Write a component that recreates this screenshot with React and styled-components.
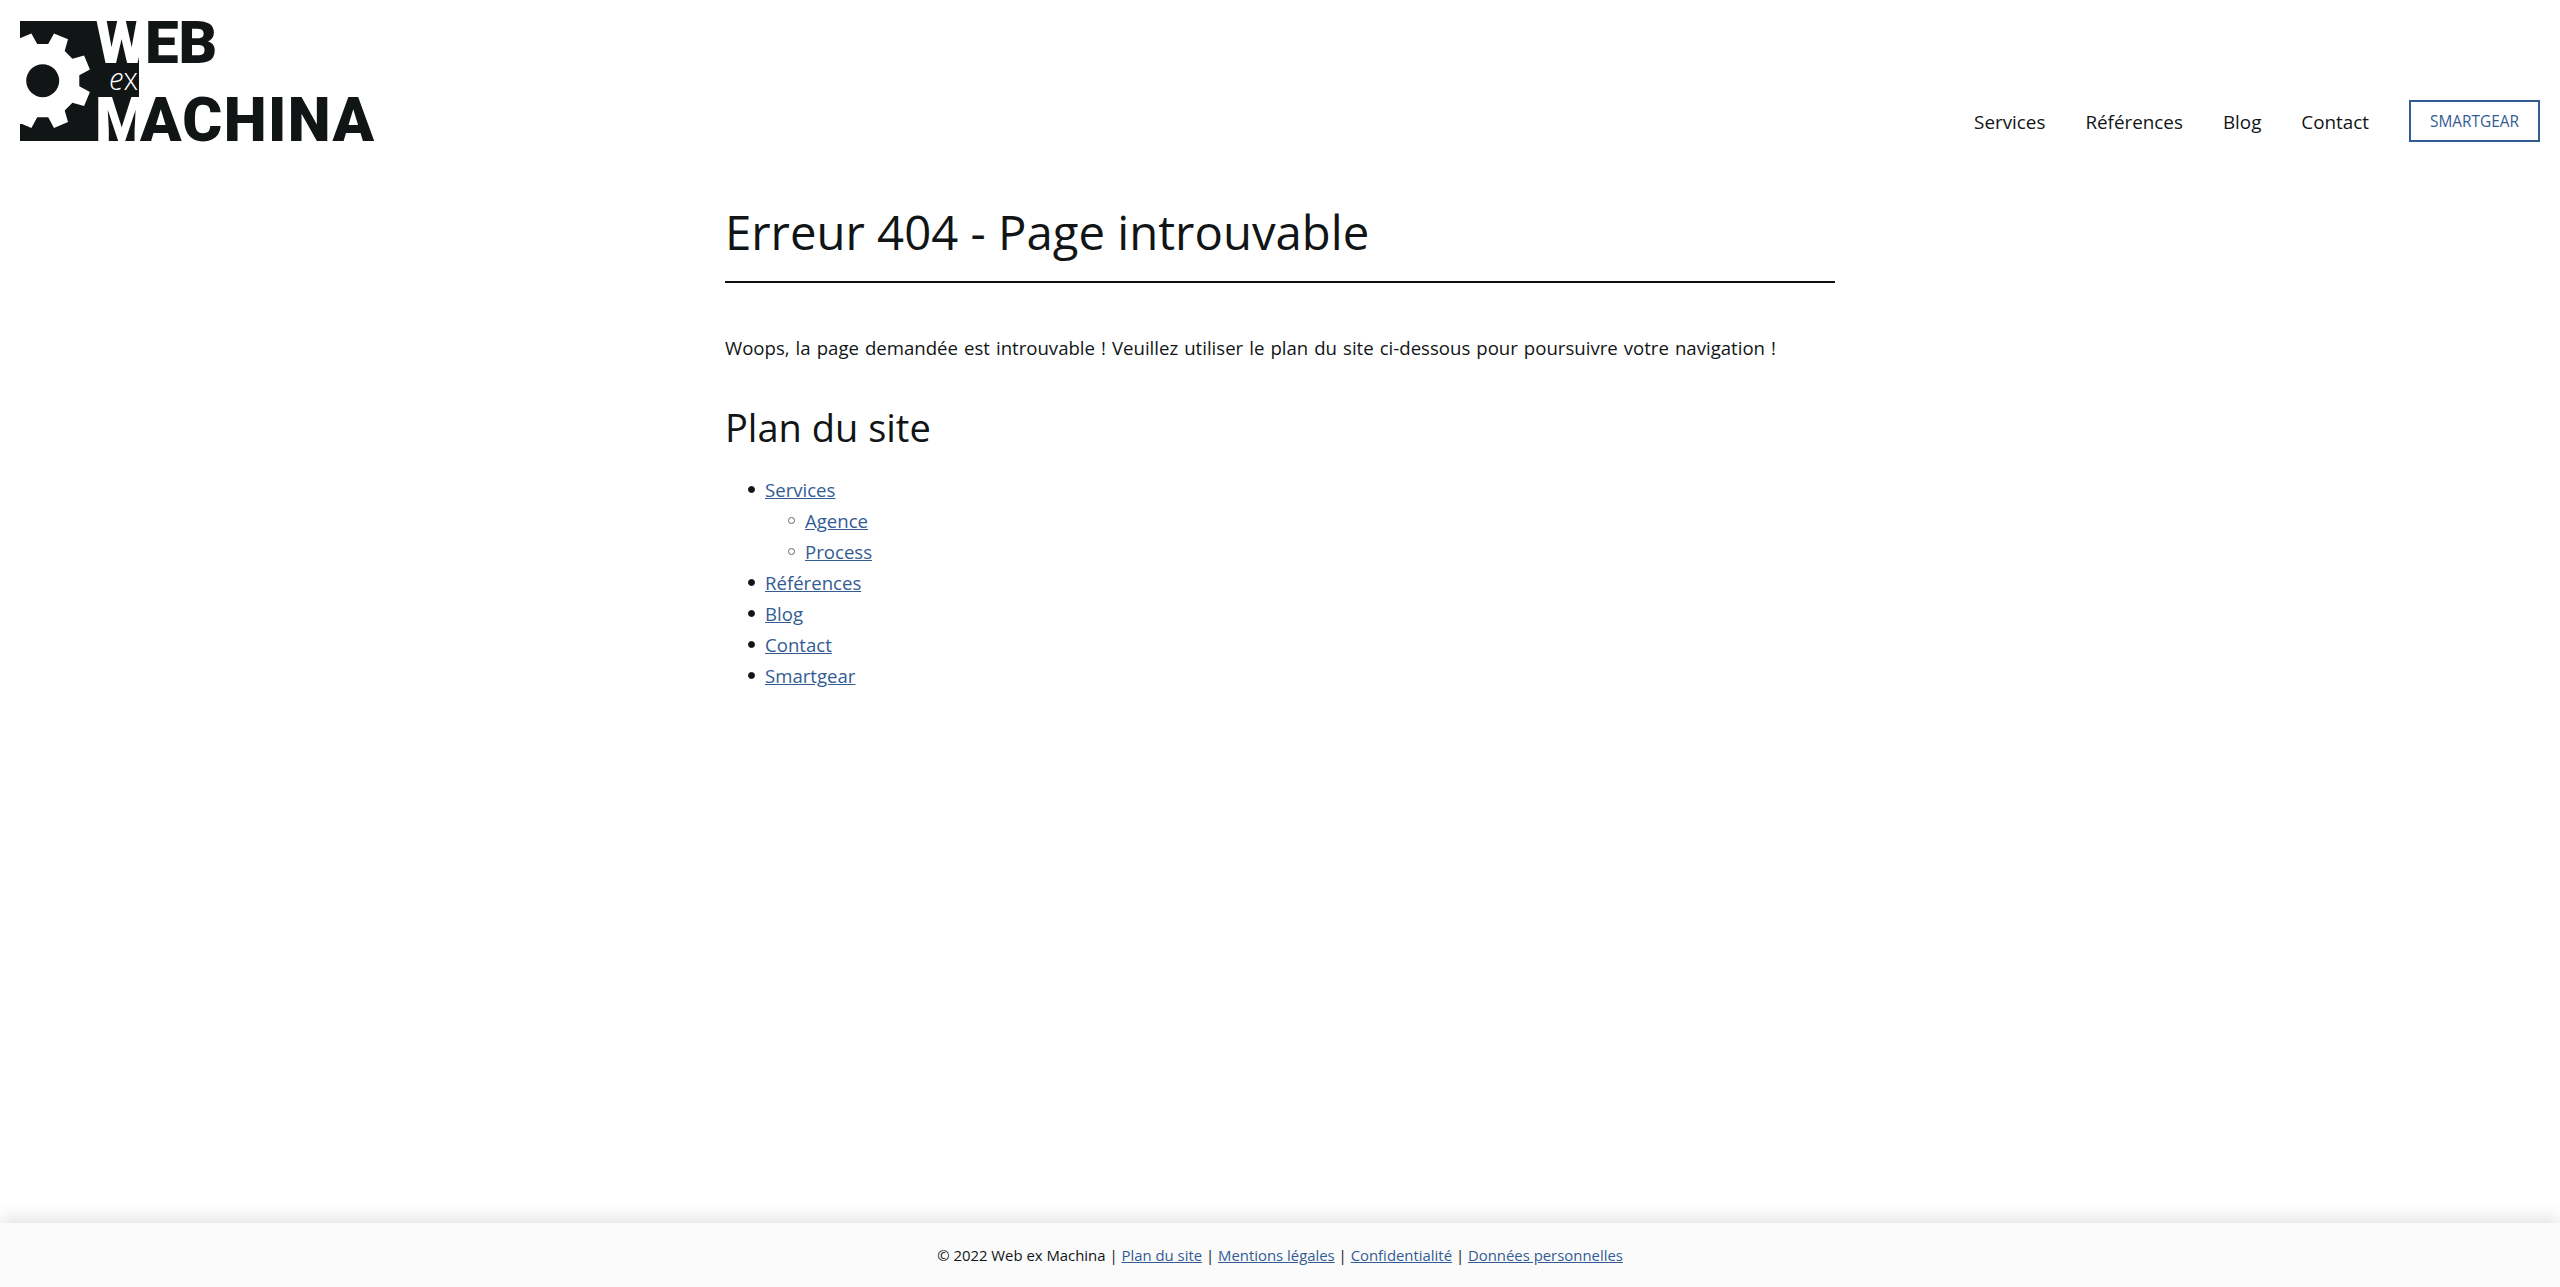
import React from 'react';
import styled, { createGlobalStyle } from 'styled-components';

const colors = {
  ink: '#111516',
  link: '#335c93',
};

const GlobalStyle = createGlobalStyle`
  html, body {
    margin: 0;
    height: 100%;
  }
  body {
    font-family: "Open Sans", "Noto Sans", sans-serif;
    color: ${colors.ink};
    background: #fff;
  }
  #root {
    height: 100%;
  }
`;

const Page = styled.div`
  height: 1287px;
  display: flex;
  flex-direction: column;
  overflow: hidden;
`;

const Header = styled.header`
  height: 167px;
  padding: 0 20px;
  display: flex;
  justify-content: space-between;
  align-items: flex-start;
`;

const LogoWrap = styled.a`
  display: block;
  margin-top: 21px;
  width: 356px;
  height: 121px;
`;

const LogoSvg = styled.svg`
  display: block;
  overflow: visible;
`;

const Nav = styled.nav`
  margin-top: 100px;
  display: flex;
  align-items: center;
  gap: 40px;
`;

const NavLink = styled.a`
  font-size: 18.83px;
  line-height: 26px;
  padding-top: 2px;
  color: ${colors.ink};
  text-decoration: none;
`;

const NavButton = styled.a`
  width: 131px;
  height: 42px;
  box-sizing: border-box;
  border: 2px solid ${colors.link};
  color: ${colors.link};
  font-size: 15.4px;
  display: flex;
  align-items: center;
  justify-content: center;
`;

const Main = styled.main`
  flex: 1;
  width: 1110px;
  margin: 0 auto;
`;

const Title = styled.h1`
  margin: 34px 0 0;
  padding-bottom: 18px;
  font-size: 47.3px;
  line-height: 62px;
  font-weight: 400;
  border-bottom: 2px solid #111;
`;

const Intro = styled.p`
  margin: 49px 0 0;
  font-size: 18.6px;
  line-height: 31px;
  word-spacing: 1.2px;
`;

const SubTitle = styled.h2`
  margin: 38px 0 0;
  font-size: 38px;
  line-height: 52px;
  font-weight: 400;
`;

const List = styled.ul`
  margin: 21px 0 0;
  padding-left: 40px;
  list-style: none;
  font-size: 18.6px;
  line-height: 31px;
`;

const Item = styled.li`
  position: relative;
  &::before {
    content: '';
    position: absolute;
    left: -17px;
    top: 12px;
    width: 7px;
    height: 7px;
    box-sizing: border-box;
    border-radius: 50%;
    background: ${(p) => (p.$sub ? '#fff' : colors.ink)};
    border: 1px solid ${(p) => (p.$sub ? '#666' : colors.ink)};
  }
`;

const SubList = styled.ul`
  margin: 0;
  padding-left: 40px;
  list-style: none;
`;

const TextLink = styled.a`
  color: ${colors.link};
  text-decoration: underline;
`;

const Footer = styled.footer`
  height: 64px;
  background: #fbfbfb;
  box-shadow: 0 -3px 18px rgba(0, 0, 0, 0.14);
  display: flex;
  align-items: center;
  justify-content: center;
  font-size: 14.9px;
`;

// gear centred on the block, notches at 0/45/90deg, teeth in between
function gearPath(cx, cy) {
  const pt = (r, deg) => {
    const a = (deg * Math.PI) / 180;
    return `${(cx + r * Math.cos(a)).toFixed(1)} ${(cy + r * Math.sin(a)).toFixed(1)}`;
  };
  const points = [];
  for (let i = 0; i < 8; i++) {
    const c = 22.5 + i * 45;
    points.push(pt(37, c - 14), pt(48.5, c - 9), pt(48.5, c + 9), pt(37, c + 14));
  }
  return `M${points.join('L')}Z`;
}

function Logo() {
  return (
    <LogoSvg width="356" height="121" viewBox="0 0 356 121">
      <rect width="119" height="120" fill={colors.ink} />
      <path fill="#fff" d={gearPath(22.7, 59.7)} />
      <rect y="17" width="6" height="86" fill="#fff" />
      <circle cx="22.7" cy="59.7" r="16.5" fill={colors.ink} />
      <text x="76" y="42" fontFamily="Roboto" fontWeight="900" fontSize="59" fill="#fff">W</text>
      <text x="125" y="42" fontFamily="Roboto" fontWeight="900" fontSize="60" fill={colors.ink}>EB</text>
      <rect x="88" y="42" width="31" height="34" fill={colors.ink} />
      <text x="89" y="69" fontFamily="Open Sans" fontWeight="300" fontSize="32" fill="#fff" textLength="29" lengthAdjust="spacingAndGlyphs">
        <tspan fontStyle="italic">e</tspan>x
      </text>
      <text x="75" y="120" fontFamily="Roboto" fontWeight="900" fontSize="61" fill="#fff">M</text>
      <text x="120" y="120" fontFamily="Roboto" fontWeight="900" fontSize="61" letterSpacing="1.4" fill={colors.ink}>ACHINA</text>
    </LogoSvg>
  );
}

export default function App() {
  return (
    <Page>
      <GlobalStyle />
      <Header>
        <LogoWrap><Logo /></LogoWrap>
        <Nav>
          <NavLink>Services</NavLink>
          <NavLink>Références</NavLink>
          <NavLink>Blog</NavLink>
          <NavLink>Contact</NavLink>
          <NavButton>SMARTGEAR</NavButton>
        </Nav>
      </Header>
      <Main>
        <Title>Erreur 404 - Page introuvable</Title>
        <Intro>Woops, la page demandée est introuvable ! Veuillez utiliser le plan du site ci-dessous pour poursuivre votre navigation !</Intro>
        <SubTitle>Plan du site</SubTitle>
        <List>
          <Item>
            <TextLink>Services</TextLink>
            <SubList>
              <Item $sub><TextLink>Agence</TextLink></Item>
              <Item $sub><TextLink>Process</TextLink></Item>
            </SubList>
          </Item>
          <Item><TextLink>Références</TextLink></Item>
          <Item><TextLink>Blog</TextLink></Item>
          <Item><TextLink>Contact</TextLink></Item>
          <Item><TextLink>Smartgear</TextLink></Item>
        </List>
      </Main>
      <Footer>
        <span>
          © 2022 Web ex Machina | <TextLink>Plan du site</TextLink> | <TextLink>Mentions légales</TextLink> | <TextLink>Confidentialité</TextLink> | <TextLink>Données personnelles</TextLink>
        </span>
      </Footer>
    </Page>
  );
}
